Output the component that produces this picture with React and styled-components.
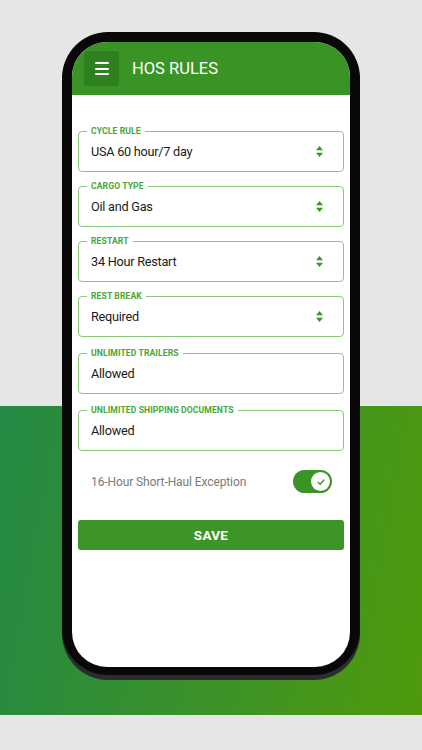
import React from 'react';
import styled, { createGlobalStyle } from 'styled-components';

const GlobalStyle = createGlobalStyle`
  html, body {
    margin: 0;
    padding: 0;
  }
  body {
    font-family: Roboto, "Liberation Sans", Arial, sans-serif;
    -webkit-font-smoothing: antialiased;
  }
  * {
    box-sizing: border-box;
  }
`;

const Stage = styled.div`
  width: 422px;
  height: 750px;
  overflow: hidden;
  display: flex;
  justify-content: center;
  padding-top: 32px;
  background:
    linear-gradient(100deg, #238944 0%, #3c9228 55%, #4f9a0b 100%) 0 406px / 100% 309px no-repeat,
    #e6e6e6;
`;

const Phone = styled.div`
  width: 298px;
  height: 643px;
  padding: 10px;
  background: #080808;
  border-radius: 46px;
  box-shadow: 0 5px 0 #2c2c2c;
`;

const Screen = styled.div`
  height: 625px;
  background: #fff;
  border-radius: 35px;
  overflow: hidden;
  display: flex;
  flex-direction: column;
`;

const Header = styled.header`
  height: 53px;
  flex-shrink: 0;
  background: #3a9425;
  display: flex;
  align-items: center;
  padding-left: 12px;
  gap: 13px;
`;

const MenuButton = styled.button`
  width: 35px;
  height: 35px;
  border: 0;
  border-radius: 3px;
  background: #2f801e;
  display: flex;
  flex-direction: column;
  justify-content: center;
  align-items: center;
  gap: 3.5px;
  padding: 0;

  & span {
    display: block;
    width: 14px;
    height: 2px;
    background: #fff;
    border-radius: 1px;
  }
`;

const Title = styled.h1`
  margin: 0;
  color: #fff;
  font-size: 16.5px;
  font-weight: 400;
  letter-spacing: 0;
`;

const Form = styled.div`
  display: flex;
  flex-direction: column;
  gap: 14px;
  padding: 36px 6px 0;
`;

const Field = styled.div`
  position: relative;
  height: 41px;
  border: 1px solid #8ac979;
  border-radius: 4px;
  display: flex;
  align-items: center;
  justify-content: space-between;
  padding: 0 20px 0 12px;
  margin-top: ${p => (p.$text ? '2px' : '0')};
`;

const Legend = styled.span`
  position: absolute;
  top: -6px;
  left: 8px;
  padding: 0 4px;
  background: #fff;
  color: #4aa636;
  font-size: 8.6px;
  font-weight: 700;
  line-height: 10px;
  letter-spacing: 0.1px;
  text-transform: uppercase;
`;

const Value = styled.span`
  color: #1a1a1a;
  font-size: 12.7px;
  letter-spacing: -0.25px;
`;

const Arrows = styled.svg`
  width: 7px;
  height: 11px;
  fill: #3a9425;
`;

const ToggleRow = styled.div`
  display: flex;
  align-items: center;
  justify-content: space-between;
  padding: 0 12px 0 13px;
  margin-top: 5px;
`;

const ToggleLabel = styled.span`
  color: #7a7a7a;
  font-size: 12px;
  letter-spacing: -0.1px;
`;

const Toggle = styled.div`
  width: 39px;
  height: 23px;
  border-radius: 12px;
  background: ${p => (p.$on ? '#3a9425' : '#bdbdbd')};
  display: flex;
  align-items: center;
  justify-content: ${p => (p.$on ? 'flex-end' : 'flex-start')};
  padding: 0 2px;
`;

const Knob = styled.div`
  width: 19px;
  height: 19px;
  border-radius: 50%;
  background: #fff;
  display: flex;
  align-items: center;
  justify-content: center;
`;

const SaveButton = styled.button`
  margin-top: 13px;
  height: 30px;
  border: 0;
  border-radius: 3px;
  background: #3c9526;
  color: #fff;
  font-family: inherit;
  font-size: 13.5px;
  font-weight: 700;
  letter-spacing: 0.3px;
`;

const SelectArrows = () => (
  <Arrows viewBox="0 0 7 11">
    <path d="M3.5 0 L7 4.3 H0 Z" />
    <path d="M0 6.7 H7 L3.5 11 Z" />
  </Arrows>
);

const fields = [
  { label: 'Cycle Rule', value: 'USA 60 hour/7 day', select: true },
  { label: 'Cargo Type', value: 'Oil and Gas', select: true },
  { label: 'Restart', value: '34 Hour Restart', select: true },
  { label: 'Rest Break', value: 'Required', select: true },
  { label: 'Unlimited Trailers', value: 'Allowed' },
  { label: 'Unlimited Shipping Documents', value: 'Allowed' },
];

export default function App() {
  return (
    <>
      <GlobalStyle />
      <Stage>
        <Phone>
          <Screen>
            <Header>
              <MenuButton aria-label="menu">
                <span />
                <span />
                <span />
              </MenuButton>
              <Title>HOS RULES</Title>
            </Header>
            <Form>
              {fields.map(f => (
                <Field key={f.label} $text={!f.select}>
                  <Legend>{f.label}</Legend>
                  <Value>{f.value}</Value>
                  {f.select && <SelectArrows />}
                </Field>
              ))}
              <ToggleRow>
                <ToggleLabel>16-Hour Short-Haul Exception</ToggleLabel>
                <Toggle $on>
                  <Knob>
                    <svg width="10" height="10" viewBox="0 0 10 10">
                      <path d="M2 5.2 L4.2 7.3 L8 3" fill="none" stroke="#3a9425" strokeWidth="1.3" strokeLinecap="round" strokeLinejoin="round" />
                    </svg>
                  </Knob>
                </Toggle>
              </ToggleRow>
              <SaveButton>SAVE</SaveButton>
            </Form>
          </Screen>
        </Phone>
      </Stage>
    </>
  );
}
